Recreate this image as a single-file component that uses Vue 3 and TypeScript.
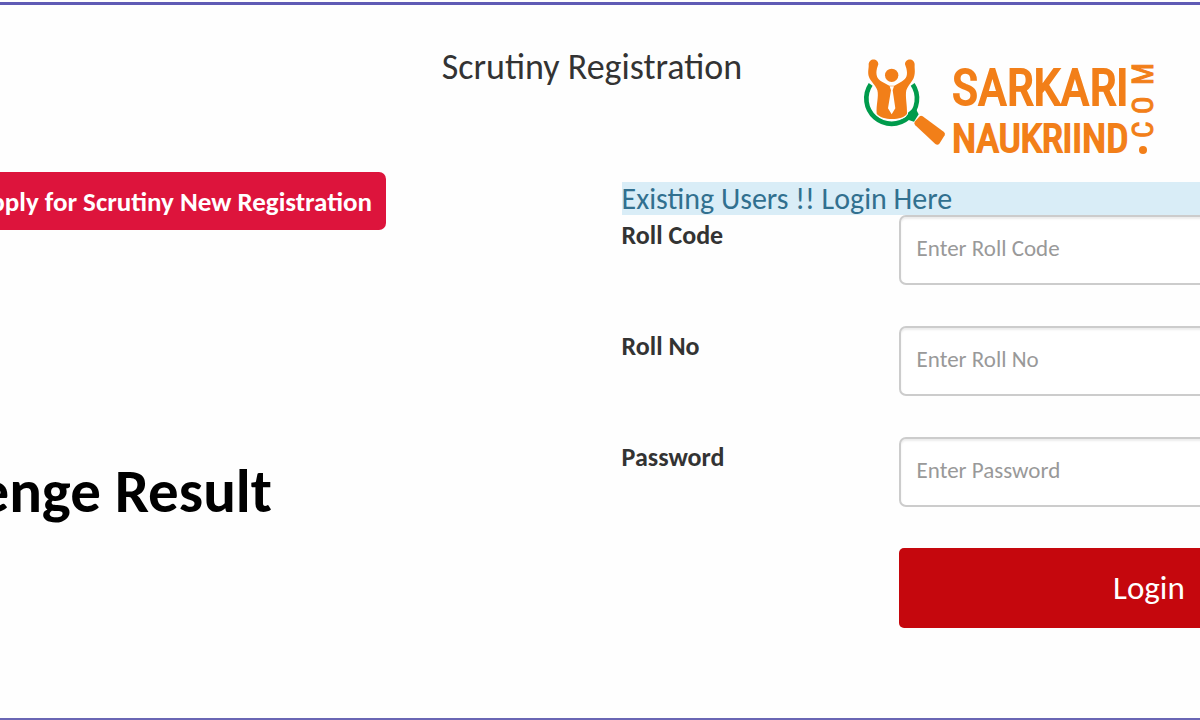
<script setup lang="ts">
import { reactive } from 'vue'

interface Field {
  id: 'rollCode' | 'rollNo' | 'password'
  label: string
  type: string
}

const fields: Field[] = [
  { id: 'rollCode', label: 'Roll Code', type: 'text' },
  { id: 'rollNo', label: 'Roll No', type: 'text' },
  { id: 'password', label: 'Password', type: 'password' },
]
const values = reactive({ rollCode: '', rollNo: '', password: '' })
</script>

<template>
  <div class="page">
    <header class="header">
      <h1 class="title">Scrutiny Registration</h1>
      <svg class="logo" width="300" height="112" viewBox="0 0 300 112" role="img" aria-label="Sarkari Naukriind .com">
        <g transform="translate(-1 -2) scale(0.3333)">
          <path d="M32 88A76 76 0 1 0 158 88" fill="none" stroke="#009b4c" stroke-width="14" />
          <path d="M136 180L165 155L172 170L176 178L162 200L148 196Z" fill="#009b4c" />
          <path
            d="M26 30C25 8 55 8 55 28L51 40C46 60 52 74 66 80L88 92H103L124 80C140 72 144 60 139 40L135 28C135 8 165 8 164 30C163 38 167 52 162 66C158 80 144 90 139 106C135 124 142 150 141 176C130 196 66 198 50 176C48 150 57 124 52 106C47 90 32 80 27 66C22 52 27 38 26 30Z"
            fill="#f27f19" stroke="#fff" stroke-width="6" paint-order="stroke"
          />
          <circle cx="95" cy="61" r="20" fill="#f27f19" />
          <path d="M89 94H102L98 106L106 160L95 178L84 160L93 106Z" fill="#fff" />
          <path d="M164 200L179 184Q183 181 188 184L252 231Q257 236 254 241L238 266Q233 272 226 267L166 211Q161 206 164 200Z" fill="#f27f19" />
        </g>
        <circle cx="282" cy="93" r="4" fill="#f27f19" />
        <g class="brand">
          <text x="91" y="48" class="brand-top">SARKARI</text>
          <text x="91" y="95" class="brand-bottom">NAUKRIIND</text>
          <text transform="translate(292 81) rotate(-90)" x="0 24 53" y="0" class="brand-side">COM</text>
        </g>
      </svg>
    </header>

    <main class="content">
      <section class="intro">
        <button type="button" class="register">Apply for Scrutiny New Registration</button>
        <h2 class="result">Challenge Result</h2>
      </section>

      <form class="login" @submit.prevent>
        <h3 class="login-title">Existing Users !! Login Here</h3>
        <div v-for="field in fields" :key="field.id" class="row">
          <label :for="field.id">{{ field.label }}</label>
          <input :id="field.id" v-model="values[field.id]" :type="field.type" :placeholder="'Enter ' + field.label" />
        </div>
        <button type="submit" class="submit">Login</button>
      </form>
    </main>
  </div>
</template>

<style>
body {
  overflow: hidden;
  background: #fefefe;
}
</style>

<style scoped>
.page {
  box-sizing: border-box;
  margin-top: 2px;
  min-height: calc(100vh - 2px);
  overflow: hidden;
  border-top: 3px solid #5f5bb5;
  border-bottom: 2px solid #6a66b4;
  color: #333;
  font-family: Calibri, Carlito, Lato, sans-serif;
}
.header {
  display: grid;
  grid-template-columns: 1fr auto 1fr;
  align-items: start;
  height: 167px;
  margin-right: 16px;
}
.title {
  grid-column: 2;
  margin: 40px 0 0;
  font-size: 36px;
  line-height: 44px;
  font-weight: 400;
}
.logo {
  justify-self: end;
  margin: 52px 23px 0 0;
}
.brand {
  fill: #f27f19;
  stroke: #f27f19;
  stroke-width: 2px;
  font-family: "Roboto Condensed", "Liberation Sans Narrow", Roboto, sans-serif;
  font-weight: 400;
}
.brand-top {
  font-size: 50px;
}
.brand-bottom {
  font-size: 39px;
}
.brand-side {
  font-size: 29px;
  stroke-width: 1px;
}
.content {
  display: grid;
  grid-template-columns: 51.8% 64.8%;
}
.intro {
  display: flex;
  flex-direction: column;
  align-items: flex-end;
  width: 386px;
  white-space: nowrap;
}
.register {
  flex: none;
  height: 58px;
  padding: 0 14px;
  border: 0;
  border-radius: 7px;
  background: #dd143c;
  color: #fff;
  font: inherit;
  font-size: 27px;
  font-weight: 700;
  white-space: nowrap;
}
.result {
  margin: 225px 114px 0 0;
  color: #000;
  font-size: 61px;
  line-height: 72px;
  font-weight: 700;
}
.login {
  padding-top: 10px;
}
.login-title {
  margin: 0;
  background: #d9edf7;
  color: #31708f;
  font-size: 30px;
  line-height: 33px;
  font-weight: 400;
}
.row {
  display: grid;
  grid-template-columns: 277px 1fr;
  align-items: start;
  margin-bottom: 41px;
}
.row label {
  padding-top: 4px;
  font-size: 26px;
  line-height: 32px;
  font-weight: 700;
}
.row input {
  box-sizing: border-box;
  width: 100%;
  height: 70px;
  padding: 0 16px 4px;
  border: 2px solid #ccc;
  border-radius: 7px;
  background: #fff;
  box-shadow: inset 0 2px 2px #00000013;
  color: #555;
  font: inherit;
  font-size: 23px;
}
.row input::placeholder {
  color: #999;
}
.submit {
  display: block;
  width: calc(100% - 277px);
  height: 80px;
  margin-left: 277px;
  padding: 0;
  border: 0;
  border-radius: 5px;
  background: #c5070d;
  color: #fff;
  font: inherit;
  font-size: 33px;
}
</style>
